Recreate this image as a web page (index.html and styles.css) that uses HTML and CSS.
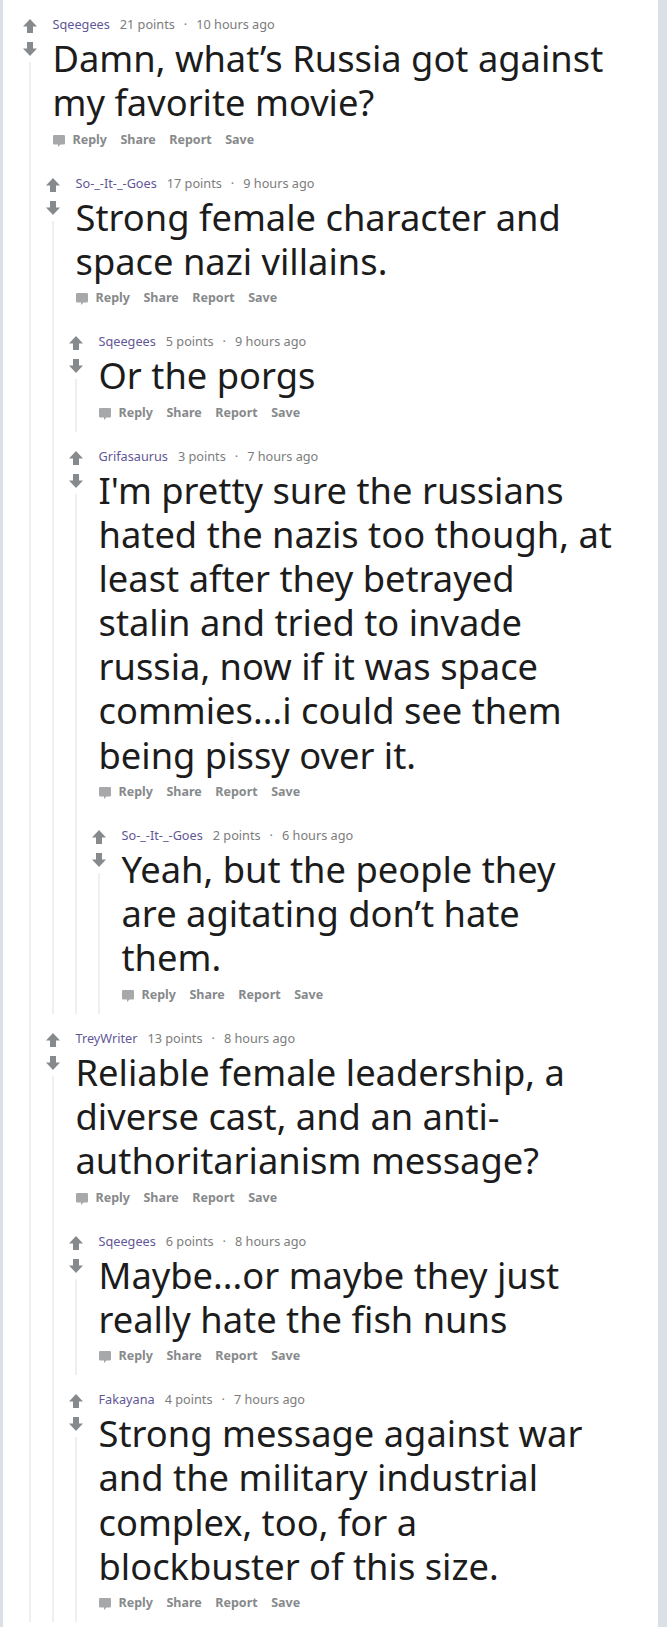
FILE: index.html
```html
<!DOCTYPE html>
<html lang="en">
<head>
<meta charset="utf-8">
<title>Comments</title>
<link rel="stylesheet" href="styles.css">
</head>
<body>
<div class="page">
  <div class="thread">

    <div class="comment">
      <div class="rail">
        <svg class="vote" viewBox="0 0 14 14"><path d="M7 0L14 7.5H10V14H4V7.5H0Z"/></svg>
        <svg class="vote down" viewBox="0 0 14 14"><path d="M7 14L14 6.5H10V0H4V6.5H0Z"/></svg>
        <div class="line"></div>
      </div>
      <div class="main">
        <div class="self">
          <div class="meta"><span class="author">Sqeegees</span><span class="score">21 points</span><span class="dot">·</span><span class="time">10 hours ago</span></div>
          <div class="body">Damn, what’s Russia got against my favorite movie?</div>
          <div class="actions"><svg class="bubble" viewBox="0 0 12 12"><path d="M1.2 0H10.8A1.2 1.2 0 0 1 12 1.2V8.3A1.2 1.2 0 0 1 10.8 9.5H7.5L5 12V9.5H1.2A1.2 1.2 0 0 1 0 8.3V1.2A1.2 1.2 0 0 1 1.2 0Z"/></svg><span class="act">Reply</span><span class="act">Share</span><span class="act">Report</span><span class="act">Save</span></div>
        </div>
        <div class="children">

          <div class="comment">
            <div class="rail">
              <svg class="vote" viewBox="0 0 14 14"><path d="M7 0L14 7.5H10V14H4V7.5H0Z"/></svg>
              <svg class="vote down" viewBox="0 0 14 14"><path d="M7 14L14 6.5H10V0H4V6.5H0Z"/></svg>
              <div class="line"></div>
            </div>
            <div class="main">
              <div class="self">
                <div class="meta"><span class="author">So-_-It-_-Goes</span><span class="score">17 points</span><span class="dot">·</span><span class="time">9 hours ago</span></div>
                <div class="body">Strong female character and space nazi villains.</div>
                <div class="actions"><svg class="bubble" viewBox="0 0 12 12"><path d="M1.2 0H10.8A1.2 1.2 0 0 1 12 1.2V8.3A1.2 1.2 0 0 1 10.8 9.5H7.5L5 12V9.5H1.2A1.2 1.2 0 0 1 0 8.3V1.2A1.2 1.2 0 0 1 1.2 0Z"/></svg><span class="act">Reply</span><span class="act">Share</span><span class="act">Report</span><span class="act">Save</span></div>
              </div>
              <div class="children">

                <div class="comment">
                  <div class="rail">
                    <svg class="vote" viewBox="0 0 14 14"><path d="M7 0L14 7.5H10V14H4V7.5H0Z"/></svg>
                    <svg class="vote down" viewBox="0 0 14 14"><path d="M7 14L14 6.5H10V0H4V6.5H0Z"/></svg>
                    <div class="line"></div>
                  </div>
                  <div class="main">
                    <div class="self">
                      <div class="meta"><span class="author">Sqeegees</span><span class="score">5 points</span><span class="dot">·</span><span class="time">9 hours ago</span></div>
                      <div class="body">Or the porgs</div>
                      <div class="actions"><svg class="bubble" viewBox="0 0 12 12"><path d="M1.2 0H10.8A1.2 1.2 0 0 1 12 1.2V8.3A1.2 1.2 0 0 1 10.8 9.5H7.5L5 12V9.5H1.2A1.2 1.2 0 0 1 0 8.3V1.2A1.2 1.2 0 0 1 1.2 0Z"/></svg><span class="act">Reply</span><span class="act">Share</span><span class="act">Report</span><span class="act">Save</span></div>
                    </div>
                  </div>
                </div>

                <div class="comment">
                  <div class="rail">
                    <svg class="vote" viewBox="0 0 14 14"><path d="M7 0L14 7.5H10V14H4V7.5H0Z"/></svg>
                    <svg class="vote down" viewBox="0 0 14 14"><path d="M7 14L14 6.5H10V0H4V6.5H0Z"/></svg>
                    <div class="line"></div>
                  </div>
                  <div class="main">
                    <div class="self">
                      <div class="meta"><span class="author">Grifasaurus</span><span class="score">3 points</span><span class="dot">·</span><span class="time">7 hours ago</span></div>
                      <div class="body">I'm pretty sure the russians hated the nazis too though, at least after they betrayed stalin and tried to invade russia, now if it was space commies...i could see them being pissy over it.</div>
                      <div class="actions"><svg class="bubble" viewBox="0 0 12 12"><path d="M1.2 0H10.8A1.2 1.2 0 0 1 12 1.2V8.3A1.2 1.2 0 0 1 10.8 9.5H7.5L5 12V9.5H1.2A1.2 1.2 0 0 1 0 8.3V1.2A1.2 1.2 0 0 1 1.2 0Z"/></svg><span class="act">Reply</span><span class="act">Share</span><span class="act">Report</span><span class="act">Save</span></div>
                    </div>
                    <div class="children">

                      <div class="comment">
                        <div class="rail">
                          <svg class="vote" viewBox="0 0 14 14"><path d="M7 0L14 7.5H10V14H4V7.5H0Z"/></svg>
                          <svg class="vote down" viewBox="0 0 14 14"><path d="M7 14L14 6.5H10V0H4V6.5H0Z"/></svg>
                          <div class="line"></div>
                        </div>
                        <div class="main">
                          <div class="self">
                            <div class="meta"><span class="author">So-_-It-_-Goes</span><span class="score">2 points</span><span class="dot">·</span><span class="time">6 hours ago</span></div>
                            <div class="body">Yeah, but the people they are agitating don’t hate them.</div>
                            <div class="actions"><svg class="bubble" viewBox="0 0 12 12"><path d="M1.2 0H10.8A1.2 1.2 0 0 1 12 1.2V8.3A1.2 1.2 0 0 1 10.8 9.5H7.5L5 12V9.5H1.2A1.2 1.2 0 0 1 0 8.3V1.2A1.2 1.2 0 0 1 1.2 0Z"/></svg><span class="act">Reply</span><span class="act">Share</span><span class="act">Report</span><span class="act">Save</span></div>
                          </div>
                        </div>
                      </div>

                    </div>
                  </div>
                </div>

              </div>
            </div>
          </div>

          <div class="comment">
            <div class="rail">
              <svg class="vote" viewBox="0 0 14 14"><path d="M7 0L14 7.5H10V14H4V7.5H0Z"/></svg>
              <svg class="vote down" viewBox="0 0 14 14"><path d="M7 14L14 6.5H10V0H4V6.5H0Z"/></svg>
              <div class="line"></div>
            </div>
            <div class="main">
              <div class="self">
                <div class="meta"><span class="author">TreyWriter</span><span class="score">13 points</span><span class="dot">·</span><span class="time">8 hours ago</span></div>
                <div class="body">Reliable female leadership, a diverse cast, and an anti-authoritarianism message?</div>
                <div class="actions"><svg class="bubble" viewBox="0 0 12 12"><path d="M1.2 0H10.8A1.2 1.2 0 0 1 12 1.2V8.3A1.2 1.2 0 0 1 10.8 9.5H7.5L5 12V9.5H1.2A1.2 1.2 0 0 1 0 8.3V1.2A1.2 1.2 0 0 1 1.2 0Z"/></svg><span class="act">Reply</span><span class="act">Share</span><span class="act">Report</span><span class="act">Save</span></div>
              </div>
              <div class="children">

                <div class="comment">
                  <div class="rail">
                    <svg class="vote" viewBox="0 0 14 14"><path d="M7 0L14 7.5H10V14H4V7.5H0Z"/></svg>
                    <svg class="vote down" viewBox="0 0 14 14"><path d="M7 14L14 6.5H10V0H4V6.5H0Z"/></svg>
                    <div class="line"></div>
                  </div>
                  <div class="main">
                    <div class="self">
                      <div class="meta"><span class="author">Sqeegees</span><span class="score">6 points</span><span class="dot">·</span><span class="time">8 hours ago</span></div>
                      <div class="body">Maybe...or maybe they just really hate the fish nuns</div>
                      <div class="actions"><svg class="bubble" viewBox="0 0 12 12"><path d="M1.2 0H10.8A1.2 1.2 0 0 1 12 1.2V8.3A1.2 1.2 0 0 1 10.8 9.5H7.5L5 12V9.5H1.2A1.2 1.2 0 0 1 0 8.3V1.2A1.2 1.2 0 0 1 1.2 0Z"/></svg><span class="act">Reply</span><span class="act">Share</span><span class="act">Report</span><span class="act">Save</span></div>
                    </div>
                  </div>
                </div>

                <div class="comment">
                  <div class="rail">
                    <svg class="vote" viewBox="0 0 14 14"><path d="M7 0L14 7.5H10V14H4V7.5H0Z"/></svg>
                    <svg class="vote down" viewBox="0 0 14 14"><path d="M7 14L14 6.5H10V0H4V6.5H0Z"/></svg>
                    <div class="line"></div>
                  </div>
                  <div class="main">
                    <div class="self">
                      <div class="meta"><span class="author">Fakayana</span><span class="score">4 points</span><span class="dot">·</span><span class="time">7 hours ago</span></div>
                      <div class="body">Strong message against war and the military industrial complex, too, for a blockbuster of this size.</div>
                      <div class="actions"><svg class="bubble" viewBox="0 0 12 12"><path d="M1.2 0H10.8A1.2 1.2 0 0 1 12 1.2V8.3A1.2 1.2 0 0 1 10.8 9.5H7.5L5 12V9.5H1.2A1.2 1.2 0 0 1 0 8.3V1.2A1.2 1.2 0 0 1 1.2 0Z"/></svg><span class="act">Reply</span><span class="act">Share</span><span class="act">Report</span><span class="act">Save</span></div>
                    </div>
                  </div>
                </div>

              </div>
            </div>
          </div>

        </div>
      </div>
    </div>

  </div>
</div>
</body>
</html>
```
FILE: styles.css
```css
html, body {
  margin: 0;
  padding: 0;
}

body {
  background: #dae0e6;
  font-family: "Noto Sans", "Open Sans", sans-serif;
  color: #1c1c1c;
}

.page {
  margin: 0 9px 0 3px;
  background: #ffffff;
  min-height: 1627px;
}

.thread {
  padding: 0 45.5px 0 16px;
}

.comment {
  display: grid;
  grid-template-columns: 22px 1fr;
  padding-top: 16px;
}

.rail {
  display: flex;
  flex-direction: column;
  align-items: center;
}

.vote {
  width: 14px;
  height: 14px;
  margin-top: 3px;
  fill: #878a8c;
  flex: none;
}

.vote.down {
  margin-top: 9px;
}

.line {
  flex: 1;
  width: 2px;
  margin-top: 6px;
  background: #edeff1;
}

.main {
  min-width: 0;
}

.self {
  padding-left: 11.5px;
}

.children {
  padding-left: 1px;
}

.meta {
  font-size: 12.7px;
  line-height: 16px;
  height: 16px;
  white-space: nowrap;
  color: #7c7c7c;
}

.author {
  color: #5f5796;
  margin-right: 10px;
}

.dot {
  margin: 0 9px;
}

.body {
  margin-top: 4px;
  font-size: 36.3px;
  line-height: 44.1px;
  color: #1c1c1c;
}

.actions {
  display: flex;
  align-items: center;
  height: 16px;
  margin-top: 7px;
  margin-bottom: 11.5px;
  font-size: 12.5px;
  font-weight: 700;
  color: #878a8c;
}

.bubble {
  width: 12px;
  height: 12px;
  fill: #a6a8aa;
  margin-right: 8px;
  margin-top: 3px;
  flex: none;
}

.act {
  margin-right: 13.5px;
}
```
